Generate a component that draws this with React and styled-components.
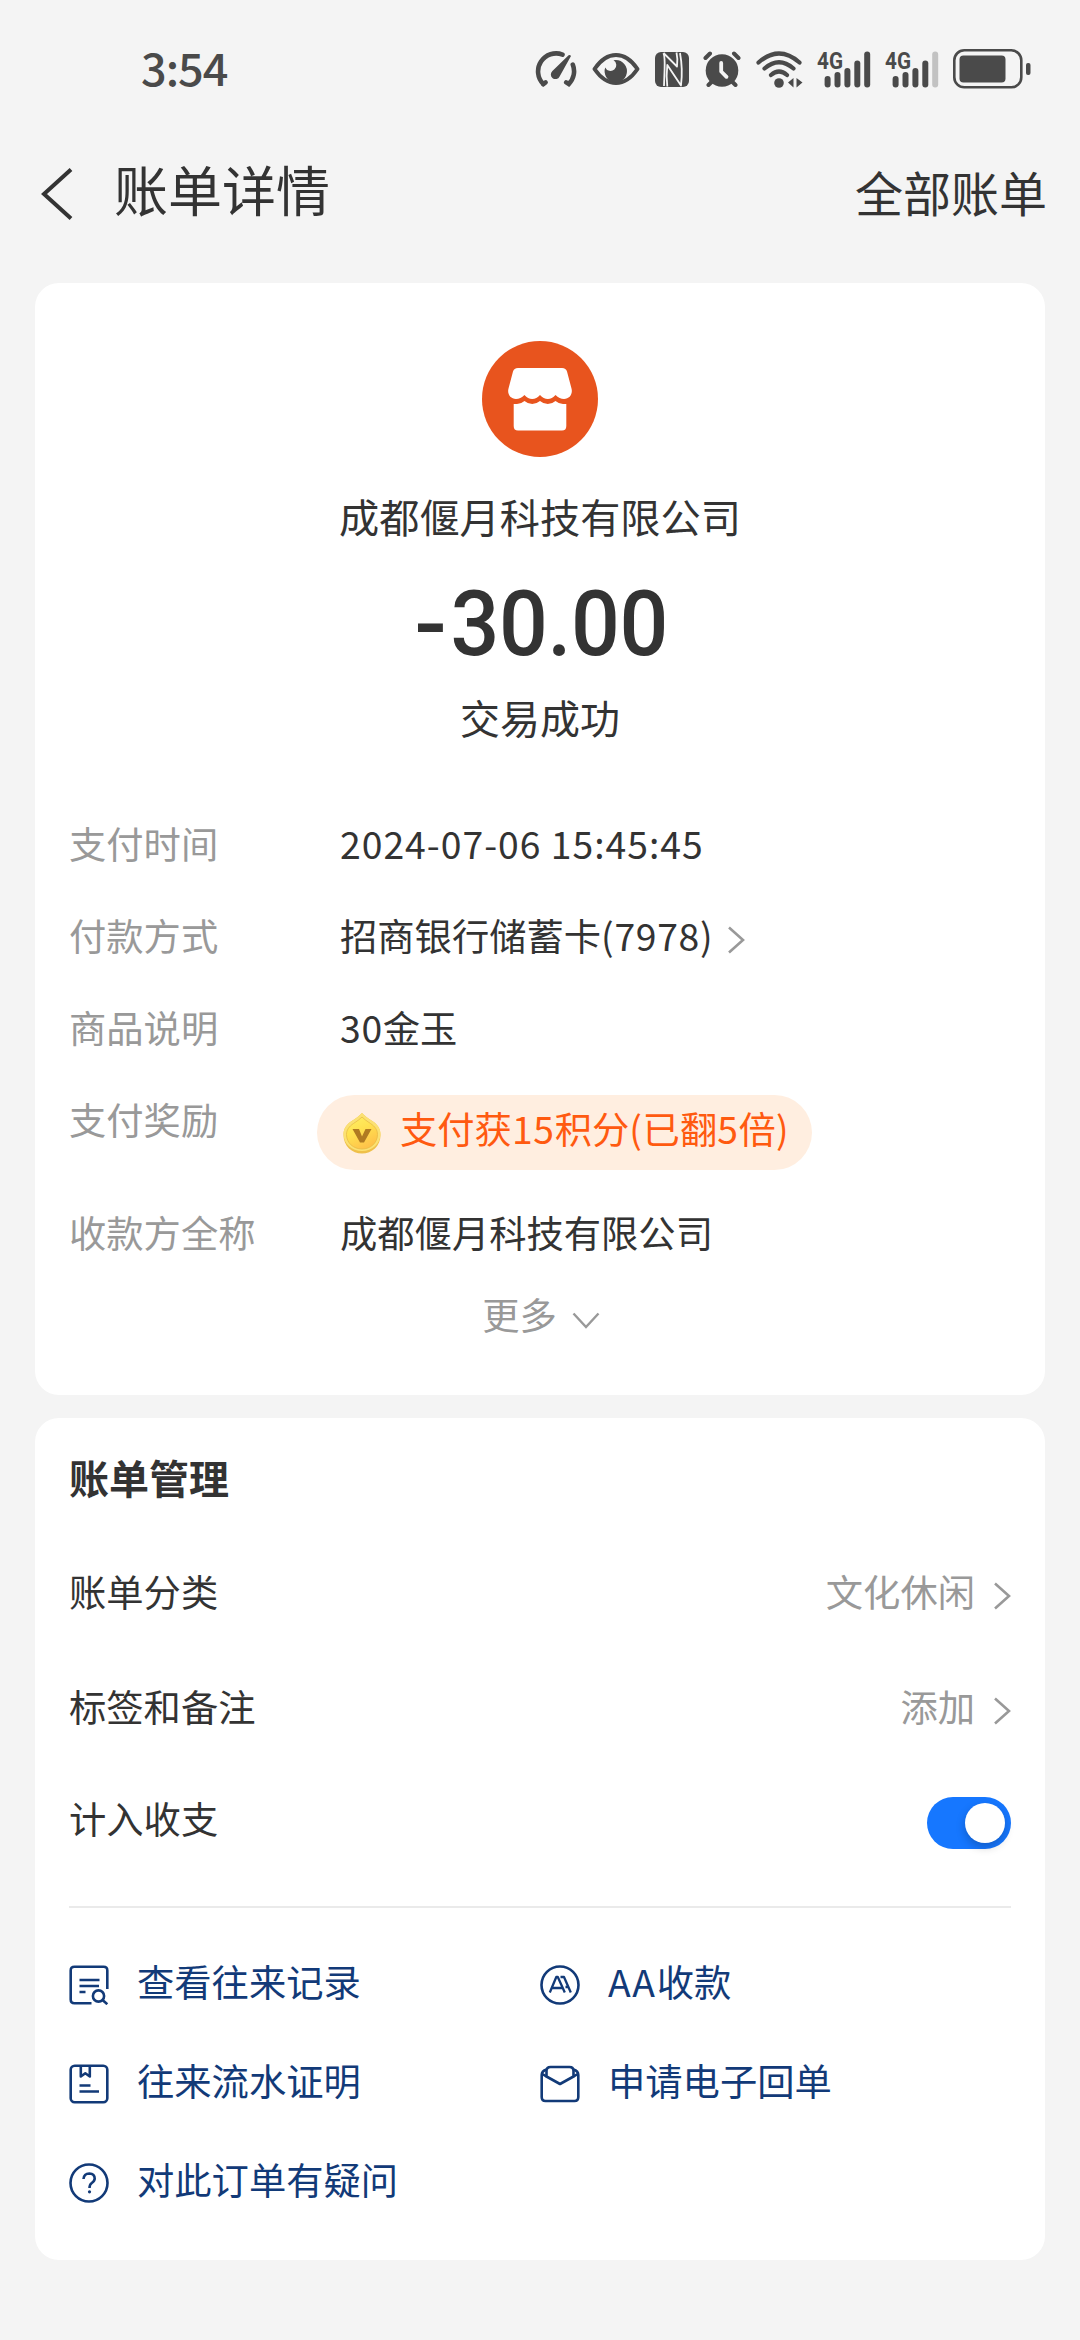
import React from 'react';
import styled, { createGlobalStyle } from 'styled-components';

const GlobalStyle = createGlobalStyle`
  *, *::before, *::after { box-sizing: border-box; }
  html, body { margin: 0; padding: 0; background: #f4f4f4; }
  body { font-family: "Noto Sans CJK SC", "Noto Sans", sans-serif; color: #333; }
  svg { display: block; flex: none; }
`;

const Screen = styled.div`
  width: 1080px;
  min-height: 2340px;
  background: #f4f4f4;
  display: flex;
  flex-direction: column;
`;

const StatusBar = styled.header`
  height: 138px;
  padding: 0 49px 0 141px;
  display: flex;
  align-items: center;
  justify-content: space-between;
  color: #4a4a4a;
`;

const Clock = styled.span`
  font-size: 45px;
  font-weight: 500;
  line-height: 60px;
  letter-spacing: -1px;
  margin-bottom: 4px;
`;

const StatusIcons = styled.div`
  display: flex;
  align-items: center;
`;

const IconSlot = styled.span`
  margin-left: ${(p) => p.$gap || 0}px;
`;

const NavBar = styled.nav`
  height: 112px;
  padding: 0 33px 0 40px;
  display: flex;
  align-items: center;
`;

const BackButton = styled.button`
  border: 0;
  padding: 0;
  background: none;
  margin-right: 41px;
`;

const Title = styled.h1`
  flex: 1;
  margin: 0 0 10px;
  font-size: 54px;
  font-weight: 400;
  line-height: 72px;
`;

const AllBills = styled.a`
  font-size: 48px;
  line-height: 64px;
  margin-bottom: 7px;
`;

const Main = styled.main`
  padding: 33px 35px 0;
  display: flex;
  flex-direction: column;
  gap: 23px;
`;

const Card = styled.section`
  background: #fff;
  border-radius: 24px;
  height: ${(p) => p.$height}px;
  padding: ${(p) => p.$top}px 34px 0;
  display: flex;
  flex-direction: column;
`;

const Payee = styled.div`
  display: flex;
  flex-direction: column;
  align-items: center;
`;

const PayeeName = styled.div`
  margin-top: 29px;
  font-size: 40.2px;
  line-height: 60px;
`;

const Amount = styled.div`
  margin: 34px 0 0 3px;
  font-family: Roboto, sans-serif;
  font-weight: 500;
  font-size: 90px;
  line-height: 90px;
  display: flex;
  letter-spacing: -0.4px;
  transform: scaleX(0.955);
`;

const Minus = styled.span`
  display: inline-block;
  transform: scaleX(1.12);
  margin-right: 6px;
`;

const PayState = styled.div`
  margin-top: 17px;
  font-size: 40px;
  line-height: 60px;
`;

const Details = styled.dl`
  margin: 50px 0 0;
`;

const DetailRow = styled.div`
  display: flex;
  align-items: flex-start;
  height: ${(p) => (p.$tall ? 112.5 : 92)}px;
`;

const Label = styled.dt`
  width: 271px;
  font-size: 37.3px;
  line-height: 92px;
  color: #999;
`;

const Value = styled.dd`
  margin: 0;
  font-size: 37.3px;
  line-height: 92px;
  letter-spacing: ${(p) => p.$spacing || 0}px;
  display: flex;
  align-items: center;
`;

const Digits = styled.span`
  letter-spacing: ${(p) => p.$spacing || 0.7}px;
`;

const RewardPill = styled.div`
  margin: 22px 0 0 -23px;
  width: 495px;
  height: 75px;
  border-radius: 38px;
  padding-left: 26px;
  display: flex;
  align-items: center;
  background: #ffeee0;
  color: #ff5a10;
`;

const RewardText = styled.span`
  margin: 0 0 9px 19px;
  line-height: 60px;
`;

const MoreButton = styled.button`
  border: 0;
  padding: 0 0 0 2px;
  background: none;
  font: inherit;
  height: 72px;
  display: flex;
  align-items: center;
  justify-content: center;
  gap: 15px;
  font-size: 37.3px;
  line-height: 60px;
  color: #999;
`;

const ChevronWrap = styled.span`
  margin-top: ${(p) => p.$drop || 0}px;
  margin-left: ${(p) => p.$left || 0}px;
`;

const SectionTitle = styled.h2`
  margin: 0 0 26px;
  font-size: 40px;
  font-weight: 700;
  line-height: 60px;
`;

const SettingRow = styled.div`
  height: ${(p) => p.$height || 115}px;
  display: flex;
  align-items: center;
  justify-content: space-between;
  font-size: 37.3px;
`;

const SettingValue = styled.span`
  display: flex;
  align-items: center;
  color: #999;
`;

const Toggle = styled.span`
  width: 84px;
  height: 52px;
  margin-top: 10px;
  padding: 6px;
  border-radius: 26px;
  display: flex;
  justify-content: flex-end;
  background: #1677ff;
`;

const Knob = styled.span`
  width: 40px;
  height: 40px;
  border-radius: 50%;
  background: #fff;
  box-shadow: 0 4px 10px rgba(0, 0, 0, 0.22);
`;

const Divider = styled.hr`
  width: 100%;
  height: 2px;
  margin: 33px 0 23px;
  border: 0;
  background: #eaeaea;
`;

const Links = styled.div`
  display: grid;
  grid-template-columns: 471px 1fr;
  grid-auto-rows: 99px;
`;

const ActionLink = styled.a`
  display: flex;
  align-items: center;
  font-size: 37.3px;
  line-height: 60px;
  color: #123a78;

  svg { margin: 8px 28px 0 0; }
`;

const Chevron = ({ down }) =>
  down ? (
    <svg width="28" height="18" viewBox="0 0 28 18" fill="none" stroke="#999" strokeWidth="2.4">
      <path d="M1.5 1.5 14 15 26.5 1.5" />
    </svg>
  ) : (
    <svg width="18" height="28" viewBox="0 0 18 28" fill="none" stroke="#999" strokeWidth="2.6">
      <path d="M2 1.5 16 14 2 26.5" />
    </svg>
  );

const Gauge = () => (
  <svg width="42" height="38" viewBox="0 0 42 38" fill="none" stroke="currentColor" strokeWidth="4.6" strokeLinecap="round">
    <path d="M27.5 4.6A18 18 0 0 0 8.2 34" />
    <path d="M8.2 34.2 10.6 32.4" />
    <path d="M37.8 14.6A18 18 0 0 1 33.8 34L31.2 32.4" />
    <path d="M33.6 5.2Q35 4.4 36 6L24.6 26.4A4.6 4.6 0 1 1 17.4 21Z" fill="currentColor" stroke="none" />
  </svg>
);

const Eye = () => (
  <svg width="48" height="34" viewBox="0 0 48 34">
    <path d="M2.5 17Q12 3 24 3T45.5 17Q36 31 24 31T2.5 17Z" fill="none" stroke="currentColor" strokeWidth="4" strokeLinejoin="round" />
    <path d="M13.2 15.5A5.8 5.8 0 1 0 21.5 8.2A11.2 11.2 0 1 1 13.2 15.5Z" fill="currentColor" />
  </svg>
);

const Nfc = () => (
  <svg width="34" height="35" viewBox="0 0 34 35">
    <rect width="34" height="35" rx="6" fill="currentColor" />
    <path
      d="M8.5 1Q10 5 9.6 17T9 34M8.5 1 22 14.5Q23 7 21.5 .5M12.3 34.5Q11 24 12.3 13L26 33.5Q28 17 25 1"
      fill="none"
      stroke="#f4f4f4"
      strokeWidth="1.8"
      strokeLinejoin="round"
    />
  </svg>
);

const Alarm = () => (
  <svg width="38" height="36" viewBox="0 0 38 36" fill="none" stroke="currentColor" strokeLinecap="round">
    <circle cx="19" cy="19.5" r="16.3" fill="currentColor" stroke="none" />
    <path d="M2.5 7 7 2.5M31 2.5 35.5 7M5.5 34 9 30.5M32.5 34 29 30.5" strokeWidth="4" />
    <path d="M18.2 12V20.5L23.5 25.8" stroke="#f4f4f4" strokeWidth="3.8" strokeLinejoin="round" />
  </svg>
);

const Wifi = () => (
  <svg width="47" height="37" viewBox="0 0 47 37" fill="none" stroke="currentColor" strokeWidth="4.2" strokeLinecap="round">
    <path d="M2.5 11.5Q23 -6.5 43.5 11.5M8.5 17.5Q23 5 37.5 17.5M15 24Q23 17 31 24" />
    <circle cx="23" cy="32" r="4.8" fill="currentColor" stroke="none" />
    <path d="M32 31.5 37.5 27V36.5ZM46.5 31.5 40.5 27V36.5Z" fill="currentColor" stroke="none" />
  </svg>
);

const Signal = ({ bars }) => (
  <svg width="54" height="53" viewBox="0 -8 54 53" fill="currentColor">
    <text x="0" y="18.2" fontFamily="Roboto, sans-serif" fontWeight="700" fontSize="24.5" textLength="26" lengthAdjust="spacingAndGlyphs">
      4G
    </text>
    {[25, 21, 17, 9.5, 0.5].map((top, i) => (
      <rect key={top} x={7.6 + i * 9.9} y={top} width="6" height={36.5 - top} rx="3" fill={i < bars ? 'currentColor' : '#c2c2c2'} />
    ))}
  </svg>
);

const Battery = () => (
  <svg width="78" height="40" viewBox="0 0 78 40">
    <rect x="1.3" y="1.3" width="67" height="37" rx="10" fill="none" stroke="currentColor" strokeWidth="2.6" />
    <rect x="6.5" y="6.5" width="46" height="27" rx="4" fill="currentColor" />
    <rect x="73" y="14" width="4.5" height="12" rx="2" fill="currentColor" />
  </svg>
);

const StoreLogo = () => (
  <svg width="116" height="116" viewBox="0 0 116 116">
    <circle cx="58" cy="58" r="58" fill="#e8541e" />
    <path
      fill="#fff"
      d="M36 27H80Q84 27 85 30.5L89.5 47.5C91 53 87.5 58 82 58Q77.5 58 73.5 54Q70 58 65.8 58T58 54Q54.5 58 50.2 58T42.5 54Q38.5 58 34 58C28.5 58 25 53 26.5 47.5L31 30.5Q32 27 36 27Z"
    />
    <path
      fill="#fff"
      d="M31.7 63H35Q39 63 42.5 60Q46 63 50.2 63T58 60Q61.5 63 65.8 63T73.5 60Q77 63 81 63H84.3V85Q84.3 89.5 80 89.5H36Q31.7 89.5 31.7 85Z"
    />
  </svg>
);

const Coin = () => (
  <svg width="38" height="42" viewBox="0 0 38 42">
    <defs>
      <linearGradient id="coinFill" x1="0" y1="0" x2="0.5" y2="1">
        <stop offset="0" stopColor="#fff066" />
        <stop offset="0.5" stopColor="#ffe150" />
        <stop offset="1" stopColor="#ffc34a" />
      </linearGradient>
    </defs>
    <path d="M19 1Q22 4.500 30 9.500C35 13 37.500 17 37.500 23C37.500 34 29 41.500 19 41.500S.5 34 .5 23C.5 17 3 13 8 9.500Q16 4.500 19 1Z" fill="#efc04a" />
    <path d="M19 1Q22 4.500 30 9.500C35 13 37.500 17 37.500 22C37.500 32 29 39 19 39S.5 32 .5 22C.5 17 3 13 8 9.500Q16 4.500 19 1Z" fill="#fbe173" />
    <path d="M19 5Q22 8 27.5 11.5C32 14.5 34.5 18 34.5 22.5C34.5 31 27.5 37 19 37S3.5 31 3.5 22.5C3.5 18 6 14.5 10.5 11.5Q16 8 19 5Z" fill="url(#coinFill)" stroke="#e9bb45" strokeWidth="0.8" />
    <path d="M9.5 17H16L19 24.5 22.5 17H28.5L21 30.5H17Z" fill="#b07a22" />
  </svg>
);

const LinkSvg = ({ children }) => (
  <svg width="40" height="40" viewBox="0 0 40 40" fill="none" stroke="#123a78" strokeWidth="2.6" strokeLinejoin="round">
    {children}
  </svg>
);

const RecordIcon = () => (
  <LinkSvg>
    <path d="M38.3 24V5.5Q38.3 1.7 34.5 1.7H5.5Q1.7 1.7 1.7 5.5V34.5Q1.7 38.3 5.5 38.3H22.5" />
    <path d="M10.5 15H30.5M10.5 21H30M10.5 27H16.5" />
    <circle cx="29.5" cy="31" r="5.6" />
    <path d="M33.5 35 38.3 39.2" />
  </LinkSvg>
);

const SplitIcon = () => (
  <LinkSvg>
    <circle cx="20" cy="20" r="18.5" />
    <path d="M9.8 27.5 16.3 12H17.8L24.8 27.5M12.5 23H22.5M20.5 12H24L30.8 27.5M25.5 22H28.5" strokeWidth="2.3" />
  </LinkSvg>
);

const ProofIcon = () => (
  <LinkSvg>
    <rect x="1.7" y="1.7" width="36.6" height="36.6" rx="4" />
    <path d="M11.8 2V12.5L16.3 9.3 20.8 12.5V2M10.5 21.5H21.5M10.5 27.5H30" />
  </LinkSvg>
);

const MailIcon = () => (
  <LinkSvg>
    <path d="M6.5 12.5V7Q6.5 3 10.5 3H29.5Q33.5 3 33.5 7V12.5L20 20 6.5 12.5Z" />
    <path d="M6.5 5.5Q1.7 7 1.7 11V33Q1.7 37 5.5 37H34.5Q38.3 37 38.3 33V11Q38.3 7 33.5 5.5M2 9.8 6.5 12.5M38 9.8 33.5 12.5" />
  </LinkSvg>
);

const HelpIcon = () => (
  <LinkSvg>
    <circle cx="20" cy="20" r="18.5" />
    <path d="M14.5 16Q15 10.5 20.3 10.5Q25.7 10.7 25.7 15.5Q25.7 18 22.8 20Q20.5 21.5 20.5 25" />
    <circle cx="20.5" cy="28.8" r="1.6" fill="#123a78" stroke="none" />
  </LinkSvg>
);

const links = [
  { id: 'record', Icon: RecordIcon, text: '查看往来记录' },
  { id: 'split', Icon: SplitIcon, latin: 'AA', text: '收款' },
  { id: 'proof', Icon: ProofIcon, text: '往来流水证明' },
  { id: 'mail', Icon: MailIcon, text: '申请电子回单' },
  { id: 'help', Icon: HelpIcon, text: '对此订单有疑问' },
];

export default function App() {
  return (
    <Screen>
      <GlobalStyle />
      <StatusBar>
        <Clock>3:54</Clock>
        <StatusIcons>
          <IconSlot><Gauge /></IconSlot>
          <IconSlot $gap={15}><Eye /></IconSlot>
          <IconSlot $gap={15}><Nfc /></IconSlot>
          <IconSlot $gap={14}><Alarm /></IconSlot>
          <IconSlot $gap={15}><Wifi /></IconSlot>
          <IconSlot $gap={14}><Signal bars={5} /></IconSlot>
          <IconSlot $gap={14}><Signal bars={4} /></IconSlot>
          <IconSlot $gap={14}><Battery /></IconSlot>
        </StatusIcons>
      </StatusBar>
      <NavBar>
        <BackButton aria-label="返回">
          <svg width="33" height="52" viewBox="0 0 33 52" fill="none" stroke="#333" strokeWidth="4">
            <path d="M31 1.5 4 26 31 50.5" />
          </svg>
        </BackButton>
        <Title>账单详情</Title>
        <AllBills>全部账单</AllBills>
      </NavBar>
      <Main>
        <Card $height={1112} $top={58}>
          <Payee>
            <StoreLogo />
            <PayeeName>成都偃月科技有限公司</PayeeName>
            <Amount><Minus>-</Minus>30.00</Amount>
            <PayState>交易成功</PayState>
          </Payee>
          <Details>
            <DetailRow>
              <Label>支付时间</Label>
              <Value $spacing={1}>2024-07-06 15:45:45</Value>
            </DetailRow>
            <DetailRow>
              <Label>付款方式</Label>
              <Value>
                招商银行储蓄卡<Digits>(7978)</Digits>
                <ChevronWrap $drop={9} $left={14}><Chevron /></ChevronWrap>
              </Value>
            </DetailRow>
            <DetailRow>
              <Label>商品说明</Label>
              <Value><Digits>30</Digits>金玉</Value>
            </DetailRow>
            <DetailRow $tall>
              <Label>支付奖励</Label>
              <Value>
                <RewardPill>
                  <Coin />
                  <RewardText>支付获<Digits>15</Digits>积分<Digits>(</Digits>已翻<Digits>5</Digits>倍)</RewardText>
                </RewardPill>
              </Value>
            </DetailRow>
            <DetailRow>
              <Label>收款方全称</Label>
              <Value>成都偃月科技有限公司</Value>
            </DetailRow>
          </Details>
          <MoreButton>
            更多
            <ChevronWrap $drop={14}><Chevron down /></ChevronWrap>
          </MoreButton>
        </Card>
        <Card $height={842} $top={29}>
          <SectionTitle>账单管理</SectionTitle>
          <SettingRow>
            账单分类
            <SettingValue>
              文化休闲
              <ChevronWrap $drop={10} $left={18}><Chevron /></ChevronWrap>
            </SettingValue>
          </SettingRow>
          <SettingRow>
            标签和备注
            <SettingValue>
              添加
              <ChevronWrap $drop={10} $left={18}><Chevron /></ChevronWrap>
            </SettingValue>
          </SettingRow>
          <SettingRow $height={110}>
            计入收支
            <Toggle role="switch" aria-checked="true"><Knob /></Toggle>
          </SettingRow>
          <Divider />
          <Links>
            {links.map(({ id, Icon, latin, text }) => (
              <ActionLink key={id}>
                <Icon />
                {latin && <Digits $spacing={1.8}>{latin}</Digits>}
                {text}
              </ActionLink>
            ))}
          </Links>
        </Card>
      </Main>
    </Screen>
  );
}
